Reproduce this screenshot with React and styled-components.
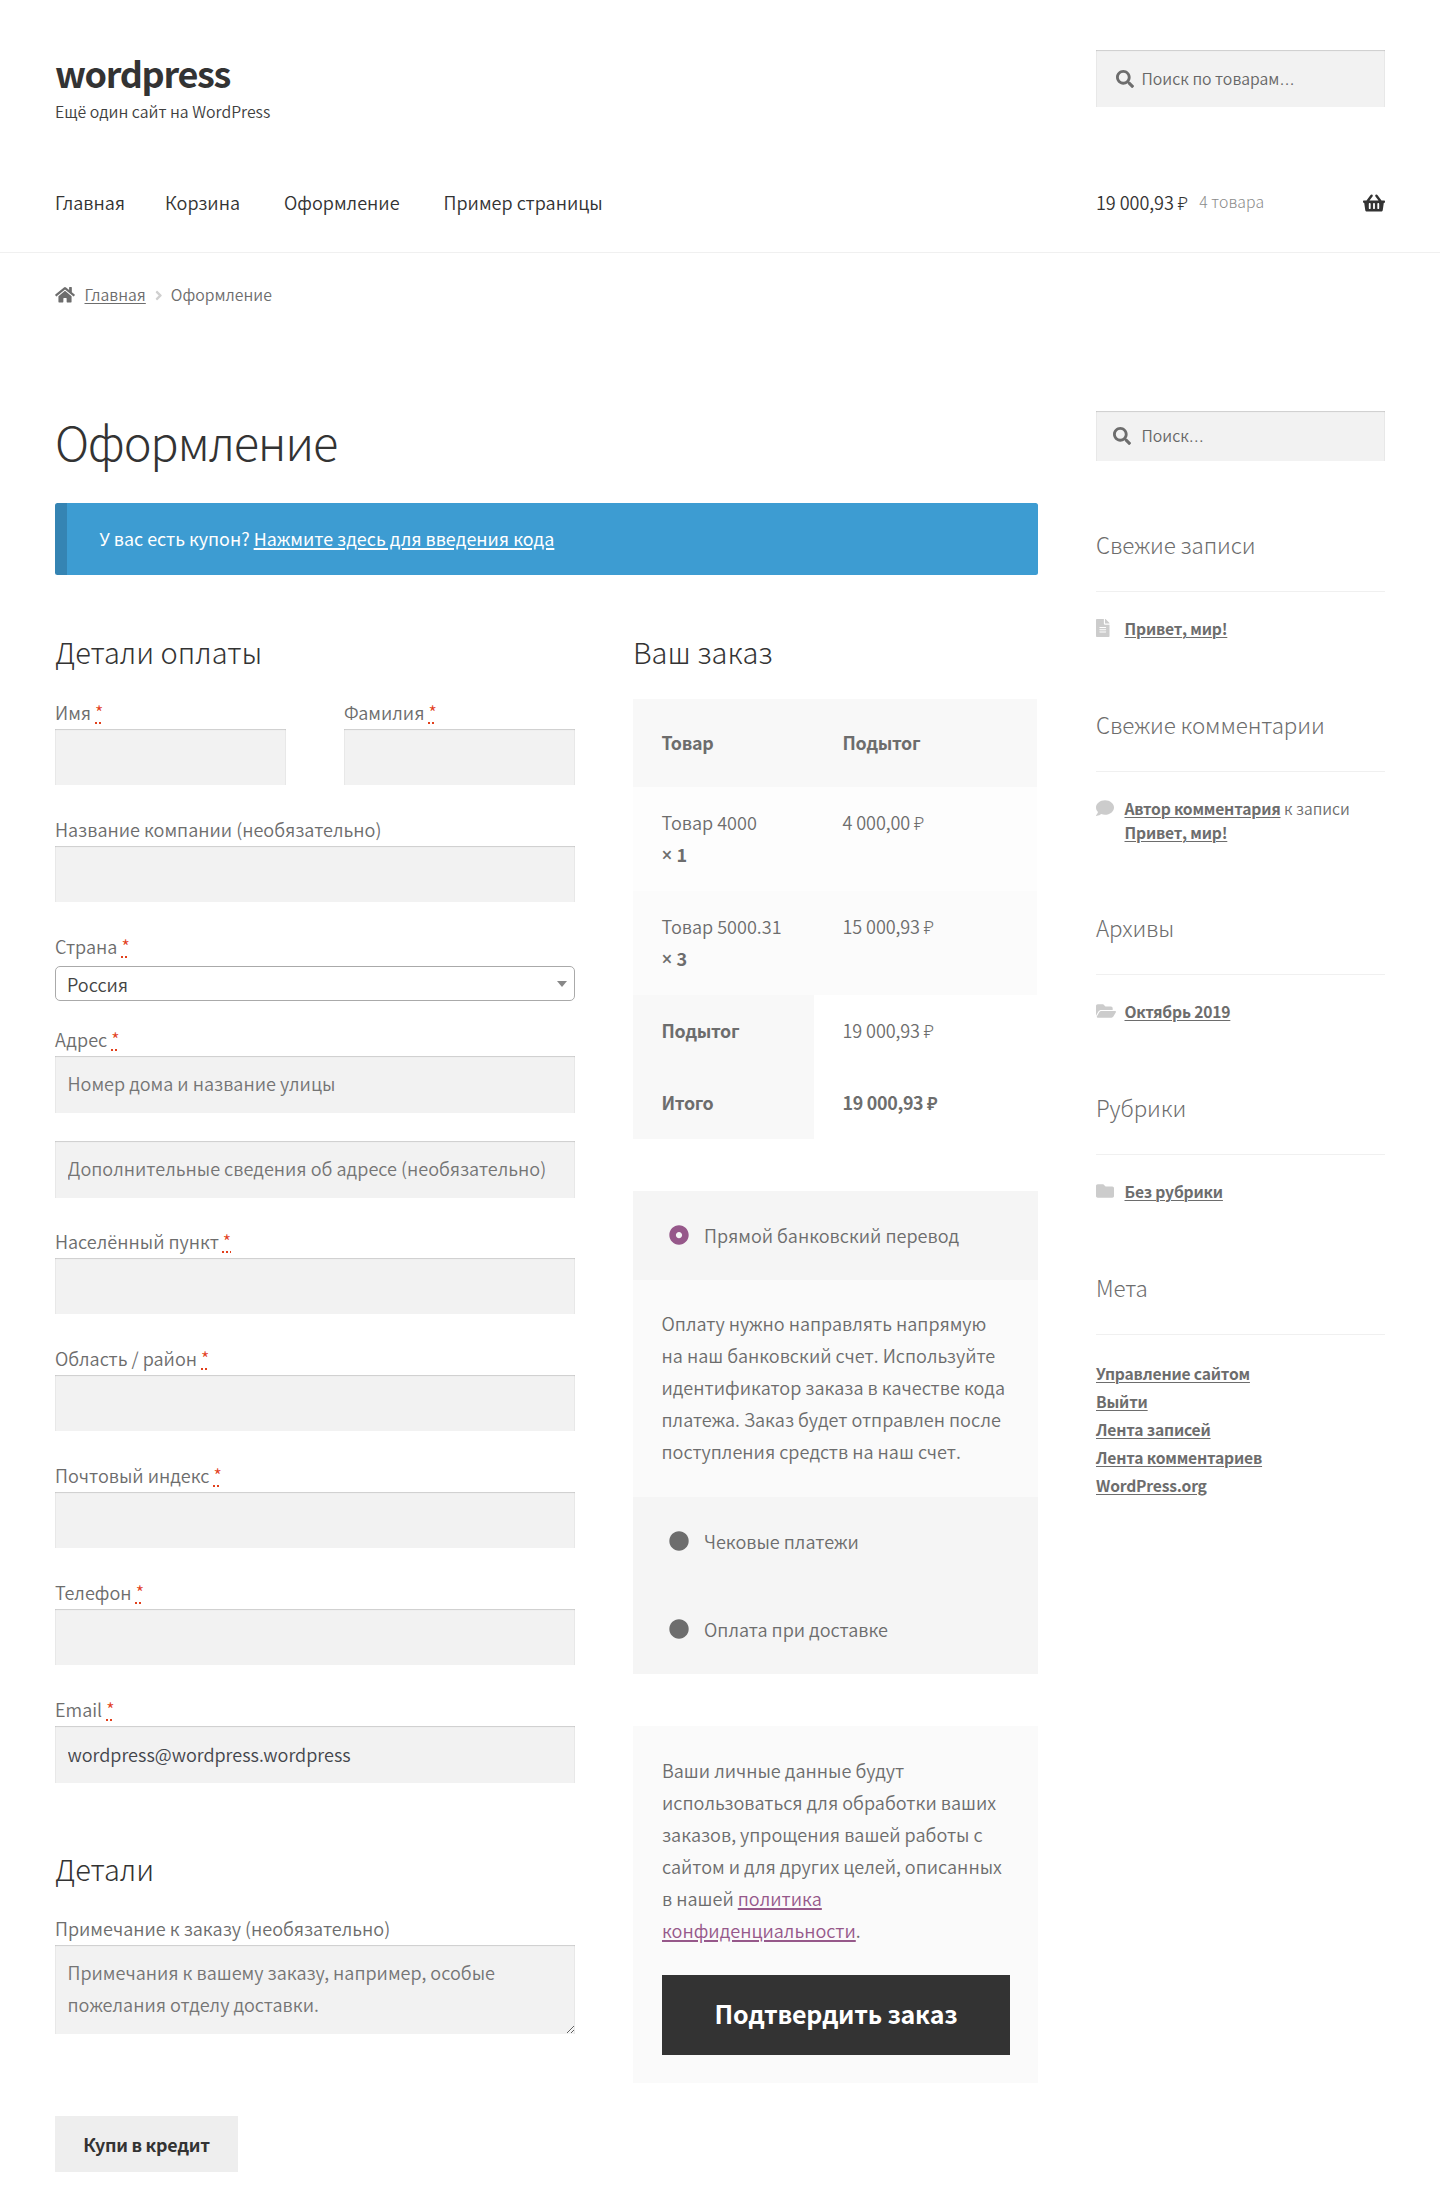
import React from "react";
import styled, { createGlobalStyle, css } from "styled-components";
import {
  FaSearch, FaHome, FaShoppingBasket, FaFileAlt, FaComment,
  FaFolderOpen, FaFolder, FaAngleRight, FaCircle, FaDotCircle,
} from "react-icons/fa";

const bodyFont = `"Source Sans Pro", "Noto Sans CJK SC", "Noto Sans", sans-serif`;
const symbolFont = `"Open Sans", "Noto Sans", sans-serif`;

const GlobalStyle = createGlobalStyle`
  *, *::before, *::after { box-sizing: border-box; }
  body { margin: 0; background: #fff; color: #6d6d6d; font: 350 18.07px/32px ${bodyFont}; }
  h1, h2, h3, p, ul { margin: 0; padding: 0; font-weight: inherit; }
  ul { list-style: none; }
  input, textarea, button { font: inherit; border: 0; border-radius: 0; outline: 0; margin: 0; }
`;

const small = css`
  font-size: 15.8px;
  line-height: 28px;
`;
const well = css`
  background: #f2f2f2;
  box-shadow: inset 0 1px 1px rgba(0, 0, 0, 0.15), inset 1px 0 1px rgba(0, 0, 0, 0.03), inset -1px 0 1px rgba(0, 0, 0, 0.03);
`;

const Page = styled.div`
  min-height: 2212px;
`;

/* Header */
const Header = styled.header`
  height: 253px;
  padding: 50px 55px 0;
  border-bottom: 1px solid #f0f0f0;
`;
const HeaderRow = styled.div`
  display: grid;
  grid-template-columns: 1fr 289px;
`;
const Branding = styled.div`
  height: 136px;
  padding-top: 2px;
`;
const SiteTitle = styled.div`
  font-size: 36px;
  line-height: 40px;
  font-weight: 700;
  letter-spacing: -1.3px;
  color: #333;
`;
const Tagline = styled.p`
  margin-top: 8px;
  font-size: 15.85px;
  line-height: 24px;
  color: #404040;
`;
const Nav = styled.nav`
  display: flex;
  gap: 44px;
  color: #333;
  a:first-child { margin-right: -4px; }
`;
const Cart = styled.div`
  display: flex;
  align-items: center;
  color: #333;
  letter-spacing: -0.05px;
  svg { margin: 2px 0 0 auto; width: 22px; height: 20px; }
`;
const CartCount = styled.span`
  margin-left: 11px;
  font-size: 15.8px;
  font-weight: 300;
  letter-spacing: 0.1px;
  color: #8a8a8a;
`;

const Search = styled.div`
  ${well}
  ${small}
  display: flex;
  align-items: center;
  height: ${(p) => p.$height}px;
  padding-left: ${(p) => p.$inset}px;
  color: #676767;
  svg { width: 18px; height: 18px; margin-right: ${(p) => 27.5 - p.$inset}px; color: #6d6d6d; }
`;
const Ellipsis = styled.span`
  font-family: ${symbolFont};
  font-size: 21px;
  line-height: 0;
`;

const Breadcrumb = styled.nav`
  ${small}
  display: flex;
  align-items: center;
  height: 28px;
  margin: 28px 55px 0;
  a { text-decoration: underline; text-decoration-thickness: 1px; text-underline-offset: 2px; }
`;
const HomeIcon = styled(FaHome)`
  width: 20px;
  height: 17.5px;
  margin-right: 9.5px;
`;
const Chevron = styled(FaAngleRight)`
  width: 7.5px;
  height: 15px;
  margin: 0 8.5px 0 9px;
  color: #d0d0d0;
`;

/* Page body */
const Body = styled.div`
  display: grid;
  grid-template-columns: 983px 289px;
  column-gap: 58px;
  margin: 100px 55px 0;
`;
const PageTitle = styled.h1`
  font-size: 47px;
  line-height: 64px;
  font-weight: 300;
  letter-spacing: -1.3px;
  color: #333;
`;
const Notice = styled.div`
  height: 72px;
  margin-top: 30px;
  padding: 19px 0 0 32.5px;
  border-left: 12px solid #3584b3;
  border-radius: 2.5px;
  background: #3d9cd2;
  color: #fff;
  font-weight: 400;
  font-size: 17.9px;
  a { text-decoration: underline; text-decoration-thickness: 1.5px; text-underline-offset: 2px; }
`;
const Columns = styled.div`
  display: grid;
  grid-template-columns: 520px 405px;
  column-gap: 58px;
  margin-top: 56px;
`;
const SectionTitle = styled.h3`
  font-size: 29px;
  line-height: 40px;
  font-weight: 300;
  letter-spacing: 0;
  color: #333;
  margin: ${(p) => p.$top || 0}px 0 ${(p) => p.$bottom}px;
`;

/* Form */
const Fields = styled.div`
  display: grid;
  grid-template-columns: 231px 231px;
  column-gap: 58px;
`;
const Field = styled.label`
  display: block;
  grid-column: ${(p) => (p.$half ? "auto" : "1 / -1")};
  margin-bottom: ${(p) => p.$gap ?? 27}px;
`;
const LabelText = styled.span`
  display: block;
  height: 34px;
  line-height: 34px;
`;
const Required = styled.abbr`
  color: #e2401c;
  text-decoration: underline dotted #e2401c;
  text-decoration-thickness: 2px;
  text-underline-offset: 2px;
  text-decoration-skip-ink: none;
`;
const Input = styled.input`
  ${well}
  display: block;
  width: 100%;
  height: ${(p) => p.$height || 56}px;
  padding: 0 12.5px ${(p) => (p.defaultValue ? 2 : 3)}px;
  color: #43454b;
  &::placeholder { color: #757575; opacity: 1; }
`;
const TextArea = styled.textarea`
  ${well}
  display: block;
  width: 100%;
  height: 89px;
  padding: 11px 12.5px;
  overflow: hidden;
  resize: vertical;
  &::placeholder { color: #757575; opacity: 1; }
`;
const Select = styled.div`
  display: flex;
  align-items: center;
  justify-content: space-between;
  height: 35px;
  margin-top: 3px;
  padding: 0 7px 0 11px;
  border: 1px solid #aaa;
  border-radius: 5px;
  color: #444;
`;
const Arrow = styled.i`
  border: solid transparent;
  border-width: 6px 5px 0;
  border-top-color: #888;
`;
const CreditButton = styled.button`
  width: 183px;
  height: 56px;
  margin: 33px 0 0 55px;
  padding: 0 0 1px;
  background: #eee;
  color: #333;
  font-weight: 600;
  font-size: 17.85px;
  letter-spacing: -0.25px;
`;

/* Order */
const OrderTable = styled.div`
  width: 404px;
`;
const OrderRow = styled.div`
  display: grid;
  grid-template-columns: 181px 1fr;
  background: ${(p) => p.$bg || "transparent"};
`;
const Cell = styled.div`
  padding: ${(p) => (p.$pad || 20) - 1}px 0 ${(p) => (p.$pad || 20) + 1}px 28.5px;
  background: ${(p) => p.$bg || "transparent"};
  font-size: ${(p) => (p.$bold ? 17.85 : 18.07)}px;
  font-weight: ${(p) => (p.$bold ? 600 : 350)};
  letter-spacing: ${(p) => (p.$bold ? -0.3 : p.$price ? -0.1 : 0)}px;
`;
const Quantity = styled.div`
  font-weight: 600;
  span { font-family: ${symbolFont}; font-size: 19px; line-height: 0; }
`;
const Payment = styled.div`
  margin-top: 52px;
  background: #f5f5f5;
`;
const Method = styled.div`
  display: flex;
  align-items: center;
  height: 88.5px;
  padding: 0 0 1px 36px;
  svg { width: 20px; height: 20px; margin-right: 15px; color: ${(p) => (p.$active ? "#96588a" : "#6d6d6d")}; }
`;
const MethodInfo = styled.p`
  padding: 27px 31px 30.5px 28.5px;
  background: #fafafa;
`;
const Confirm = styled.div`
  margin-top: 52px;
  padding: 28px 28px 28px 29px;
  background: #fafafa;
  a { color: #96588a; text-decoration: underline; text-decoration-thickness: 1.5px; text-underline-offset: 2px; }
`;
const ConfirmButton = styled.button`
  display: block;
  width: 100%;
  height: 80px;
  margin-top: 29px;
  padding: 0 0 4px;
  background: #333;
  color: #fff;
  font-size: 25px;
  font-weight: 700;
  letter-spacing: -0.22px;
`;

/* Sidebar */
const Sidebar = styled.aside`
  padding-top: 2px;
`;
const Widget = styled.section`
  margin-top: 65px;
`;
const WidgetTitle = styled.h2`
  height: 66px;
  margin-bottom: 25px;
  border-bottom: 1px solid #f0f0f0;
  font-size: 22.4px;
  line-height: 36px;
  font-weight: 300;
  letter-spacing: -0.1px;
`;
const linkStyle = css`
  a { font-weight: 600; letter-spacing: -0.18px; text-decoration: underline; text-decoration-thickness: 1px; text-underline-offset: 2px; }
`;
const WidgetItem = styled.li`
  ${linkStyle}
  display: grid;
  grid-template-columns: 28.5px 1fr;
  font-size: 15.65px;
  line-height: 23.75px;
  svg { width: ${(p) => p.$icon}px; height: 18px; margin-top: 2px; color: #ccc; }
`;
const MetaItem = styled.li`
  ${linkStyle}
  font-size: 15.65px;
  line-height: 28px;
`;

const Req = () => <Required>*</Required>;

const TextField = ({ label, required, half, gap, height, ...rest }) => (
  <Field $half={half} $gap={gap}>
    {label && <LabelText>{label}{required && <> <Req /></>}</LabelText>}
    <Input $height={height} {...rest} />
  </Field>
);

const metaLinks = ["Управление сайтом", "Выйти", "Лента записей", "Лента комментариев", "WordPress.org"];

export default function App() {
  return (
    <Page>
      <GlobalStyle />
      <Header>
        <HeaderRow>
          <Branding>
            <SiteTitle>wordpress</SiteTitle>
            <Tagline>Ещё один сайт на WordPress</Tagline>
          </Branding>
          <Search $height={57} $inset={19.5}><FaSearch /><span>Поиск по товарам<Ellipsis>…</Ellipsis></span></Search>
        </HeaderRow>
        <HeaderRow>
          <Nav>
            <a>Главная</a><a>Корзина</a><a>Оформление</a><a>Пример страницы</a>
          </Nav>
          <Cart>19 000,93 ₽ <CartCount>4 товара</CartCount><FaShoppingBasket /></Cart>
        </HeaderRow>
      </Header>

      <Breadcrumb><HomeIcon /><a>Главная</a><Chevron />Оформление</Breadcrumb>

      <Body>
        <main>
          <PageTitle>Оформление</PageTitle>
          <Notice>У вас есть купон? <a>Нажмите здесь для введения кода</a></Notice>
          <Columns>
            <div>
              <SectionTitle $bottom={24}>Детали оплаты</SectionTitle>
              <Fields>
                <TextField label="Имя" required half />
                <TextField label="Фамилия" required half />
                <TextField label="Название компании (необязательно)" />
                <Field as="div" $gap={21}>
                  <LabelText>Страна <Req /></LabelText>
                  <Select>Россия<Arrow /></Select>
                </Field>
                <TextField label="Адрес" required gap={28} height={57} placeholder="Номер дома и название улицы" />
                <TextField gap={26} height={57} placeholder="Дополнительные сведения об адресе (необязательно)" />
                <TextField label="Населённый пункт" required />
                <TextField label="Область / район" required />
                <TextField label="Почтовый индекс" required />
                <TextField label="Телефон" required />
                <TextField label="Email" required gap={0} height={57} defaultValue="wordpress@wordpress.wordpress" />
              </Fields>
              <SectionTitle $top={65} $bottom={23}>Детали</SectionTitle>
              <Field $gap={0}>
                <LabelText>Примечание к заказу (необязательно)</LabelText>
                <TextArea placeholder="Примечания к вашему заказу, например, особые пожелания отделу доставки." />
              </Field>
            </div>
            <div>
              <SectionTitle $bottom={28}>Ваш заказ</SectionTitle>
              <OrderTable>
                <OrderRow $bg="#f8f8f8"><Cell $bold $pad={28}>Товар</Cell><Cell $bold $pad={28}>Подытог</Cell></OrderRow>
                <OrderRow $bg="#fdfdfd">
                  <Cell>Товар 4000<Quantity><span>×</span> 1</Quantity></Cell>
                  <Cell $price>4 000,00 ₽</Cell>
                </OrderRow>
                <OrderRow $bg="#fbfbfb">
                  <Cell>Товар 5000.31<Quantity><span>×</span> 3</Quantity></Cell>
                  <Cell $price>15 000,93 ₽</Cell>
                </OrderRow>
                <OrderRow><Cell $bold $bg="#f8f8f8">Подытог</Cell><Cell $price>19 000,93 ₽</Cell></OrderRow>
                <OrderRow><Cell $bold $bg="#f8f8f8">Итого</Cell><Cell $bold>19 000,93 ₽</Cell></OrderRow>
              </OrderTable>
              <Payment>
                <Method $active><FaDotCircle />Прямой банковский перевод</Method>
                <MethodInfo>
                  Оплату нужно направлять напрямую на наш банковский счет. Используйте идентификатор
                  заказа в качестве кода платежа. Заказ будет отправлен после поступления средств на наш счет.
                </MethodInfo>
                <Method><FaCircle />Чековые платежи</Method>
                <Method><FaCircle />Оплата при доставке</Method>
              </Payment>
              <Confirm>
                <p>
                  Ваши личные данные будут использоваться для обработки ваших заказов, упрощения вашей
                  работы с сайтом и для других целей, описанных в нашей <a>политика конфиденциальности</a>.
                </p>
                <ConfirmButton>Подтвердить заказ</ConfirmButton>
              </Confirm>
            </div>
          </Columns>
        </main>

        <Sidebar>
          <Search $height={50} $inset={17}><FaSearch /><span>Поиск<Ellipsis>…</Ellipsis></span></Search>
          <Widget>
            <WidgetTitle>Свежие записи</WidgetTitle>
            <ul><WidgetItem $icon={13.5}><FaFileAlt /><span><a>Привет, мир!</a></span></WidgetItem></ul>
          </Widget>
          <Widget>
            <WidgetTitle>Свежие комментарии</WidgetTitle>
            <ul><WidgetItem $icon={18}><FaComment /><span><a>Автор комментария</a> к записи <a>Привет, мир!</a></span></WidgetItem></ul>
          </Widget>
          <Widget>
            <WidgetTitle>Архивы</WidgetTitle>
            <ul><WidgetItem $icon={20}><FaFolderOpen /><span><a>Октябрь 2019</a></span></WidgetItem></ul>
          </Widget>
          <Widget>
            <WidgetTitle>Рубрики</WidgetTitle>
            <ul><WidgetItem $icon={18}><FaFolder /><span><a>Без рубрики</a></span></WidgetItem></ul>
          </Widget>
          <Widget>
            <WidgetTitle>Мета</WidgetTitle>
            <ul>{metaLinks.map((t) => <MetaItem key={t}><a>{t}</a></MetaItem>)}</ul>
          </Widget>
        </Sidebar>
      </Body>
      <CreditButton>Купи в кредит</CreditButton>
    </Page>
  );
}
